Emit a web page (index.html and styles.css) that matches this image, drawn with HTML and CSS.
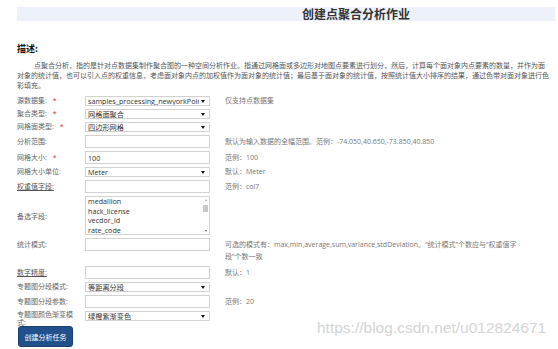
FILE: index.html
```html
<!DOCTYPE html>
<html lang="zh-CN">
<head>
    <meta charset="UTF-8">
    <meta name="viewport" content="width=device-width, initial-scale=1.0">
    <title>创建点聚合分析作业</title>
    <link rel="stylesheet" href="styles.css">
</head>
<body>

    <div class="page">
        <div class="title-bar">创建点聚合分析作业</div>

        <h3 class="desc-title">描述:</h3>
        <p class="desc">点聚合分析，指的是针对点数据集制作聚合图的一种空间分析作业。指通过网格面或多边形对地图点要素进行划分，然后，计算每个面对象内点要素的数量，并作为面对象的统计值，也可以引入点的权重信息，考虑面对象内点的加权值作为面对象的统计值；最后基于面对象的统计值，按照统计值大小排序的结果，通过色带对面对象进行色彩填充。</p>

        <div class="form">
            <div class="row sel">
                <label class="label">源数据集: <em>*</em></label>
                <div class="field drop"><select><option>samples_processing_newyorkPoint</option></select></div>
                <div class="hint">仅支持点数据集</div>
            </div>
            <div class="row sel">
                <label class="label">聚合类型: <em>*</em></label>
                <div class="field drop"><select><option>网格面聚合</option></select></div>
            </div>
            <div class="row sel">
                <label class="label">网格面类型: <em>*</em></label>
                <div class="field drop"><select><option>四边形网格</option></select></div>
            </div>
            <div class="row inp">
                <label class="label">分析范围:</label>
                <div class="field"><input type="text"></div>
                <div class="hint">默认为输入数据的全幅范围。范例：-74.050,40.650,-73.850,40.850</div>
            </div>
            <div class="row inp">
                <label class="label">网格大小: <em>*</em></label>
                <div class="field"><input type="text" value="100"></div>
                <div class="hint">范例：100</div>
            </div>
            <div class="row sel">
                <label class="label">网格大小单位:</label>
                <div class="field drop"><select><option>Meter</option></select></div>
                <div class="hint">默认：Meter</div>
            </div>
            <div class="row inp">
                <label class="label"><u>权重值字段:</u></label>
                <div class="field"><input type="text"></div>
                <div class="hint">范例：col7</div>
            </div>
            <div class="row list">
                <label class="label">备选字段:</label>
                <div class="field listbox">
                    <ul>
                        <li>medallion</li>
                        <li>hack_license</li>
                        <li>vecdor_id</li>
                        <li>rate_code</li>
                    </ul>
                    <div class="scroll">
                        <span class="up"></span>
                        <span class="thumb"></span>
                        <span class="down"></span>
                    </div>
                </div>
            </div>
            <div class="row inp">
                <label class="label">统计模式:</label>
                <div class="field"><input type="text"></div>
                <div class="hint two">可选的模式有：max,min,average,sum,variance,stdDeviation。“统计模式”个数应与“权重值字段”个数一致</div>
            </div>
            <div class="row inp">
                <label class="label"><u>数字精度:</u></label>
                <div class="field"><input type="text"></div>
                <div class="hint">默认：1</div>
            </div>
            <div class="row sel">
                <label class="label">专题图分段模式:</label>
                <div class="field drop"><select><option>等距离分段</option></select></div>
            </div>
            <div class="row inp">
                <label class="label">专题图分段参数:</label>
                <div class="field"><input type="text"></div>
                <div class="hint">范例：20</div>
            </div>
            <div class="row sel last">
                <label class="label">专题图颜色渐变模式:</label>
                <div class="field drop"><select><option>绿橙紫渐变色</option></select></div>
            </div>
        </div>

        <button class="submit">创建分析任务</button>
    </div>

    <div class="watermark">https://blog.csdn.net/u012824671</div>

</body>
</html>
```

FILE: styles.css
```css
*{
    margin: 0;
    padding: 0;
    box-sizing: border-box;
}
body{
    background-color: #fff;
    font-family: "Noto Sans CJK SC", sans-serif;
    color: #666;
    overflow: hidden;
}
.page{
    padding: 7px 3px 0 17px;
}
/* 标题栏 */
.title-bar{
    height: 14px;
    line-height: 14px;
    padding-left: 285px;
    background-color: #edf2fa;
    font-size: 12px;
    font-weight: bold;
    color: #333;
}
.desc-title{
    margin-top: 22px;
    font-size: 9px;
    line-height: 11px;
    color: #111;
}
.desc{
    width: 533px;
    margin-top: 6px;
    font-size: 7px;
    line-height: 10px;
    text-indent: 17px;
    color: #555;
}
/* 表单 */
.form{
    display: flex;
    flex-direction: column;
    gap: 3px;
    margin-top: 6px;
    font-family: "Open Sans", "Noto Sans CJK SC", sans-serif;
    font-size: 7px;
}
.row{
    display: flex;
    align-items: flex-start;
}
.label{
    width: 68px;
    padding-right: 5px;
    flex-shrink: 0;
}
.label em{
    font-style: normal;
    color: #e0302c;
    margin-left: 4px;
}
.label u{
    color: #555;
}
.field{
    width: 125px;
    flex-shrink: 0;
}
.hint{
    margin-left: 15px;
    width: 295px;
    color: #777;
}
.sel .label,
.sel .hint{
    line-height: 10px;
}
.inp .label,
.inp .hint{
    line-height: 13px;
}
.hint.two{
    line-height: 12px;
    padding-top: 1px;
}
.last .label{
    line-height: 8px;
}
.list{
    align-items: center;
}
input,
select{
    display: block;
    width: 100%;
    border: 1px solid #d2d2d2;
    background: #fff;
    color: #333;
    font-family: inherit;
    font-size: 7.2px;
    outline: none;
}
input{
    height: 13px;
    padding: 0 2px;
}
select{
    -webkit-appearance: none;
    appearance: none;
    height: 10px;
    line-height: 8px;
    padding: 0 10px 0 2px;
    border-radius: 0;
}
/* 下拉小三角 */
.drop{
    position: relative;
}
.drop::after{
    content: "";
    position: absolute;
    right: 5px;
    top: 4px;
    border-left: 2px solid transparent;
    border-right: 2px solid transparent;
    border-top: 3px solid #111;
}
/* 多选列表 */
.listbox{
    height: 39px;
    border: 1px solid #d2d2d2;
    display: flex;
    color: #333;
    font-size: 7.2px;
}
.listbox ul{
    flex: 1;
    list-style: none;
    padding: 0 2px;
    line-height: 9.6px;
    overflow: hidden;
}
.scroll{
    width: 7px;
    display: flex;
    flex-direction: column;
    align-items: center;
    padding: 2px 0;
}
.scroll .up,
.scroll .down{
    width: 0;
    height: 0;
    border-left: 1.5px solid transparent;
    border-right: 1.5px solid transparent;
}
.scroll .up{
    border-bottom: 2px solid #aaa;
}
.scroll .down{
    margin-top: auto;
    border-top: 2px solid #555;
}
.scroll .thumb{
    width: 5px;
    height: 7px;
    margin-top: 4px;
    background-color: #c8c8c8;
}
/* 按钮 */
.submit{
    display: block;
    width: 55px;
    height: 21px;
    margin-top: -1px;
    margin-left: 1px;
    border: 1px solid #173f70;
    border-radius: 3px;
    background-color: #22508a;
    color: #fff;
    font-family: inherit;
    font-size: 7px;
}
/* 水印 */
.watermark{
    position: absolute;
    left: 317px;
    top: 319px;
    font-family: "Liberation Sans", Arial, sans-serif;
    font-size: 15.5px;
    color: #d4d4d4;
}
```
